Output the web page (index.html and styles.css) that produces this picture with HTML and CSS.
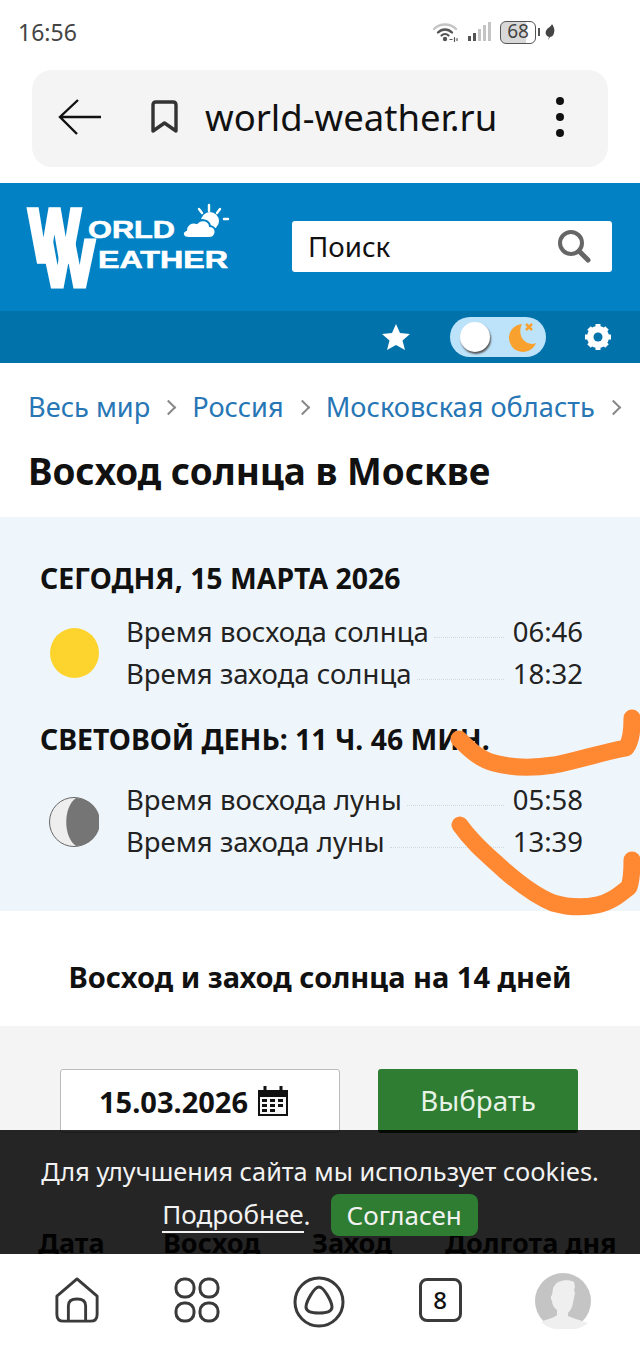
FILE: index.html
```html
<!DOCTYPE html>
<html lang="ru">
<head>
    <meta charset="UTF-8">
    <meta name="viewport" content="width=device-width, initial-scale=1.0">
    <title>Восход солнца в Москве</title>
    <link rel="stylesheet" href="styles.css">
</head>
<body>
    <div class="status">
        <span class="clock">16:56</span>
        <div class="status-icons">
            <svg width="26" height="20" viewBox="0 0 26 20" fill="none" stroke-linecap="round">
                <path d="M1 7c6-6 16-6 22 0" stroke="#c4c4c4" stroke-width="2.400"/>
                <path d="M5 10.500c4-4 10-4 14 0" stroke="#555" stroke-width="2.400"/>
                <path d="M8.500 13.500c2-2 5-2 7 0" stroke="#555" stroke-width="2.200"/>
                <circle cx="12" cy="17" r="2.200" fill="#555"/>
                <path d="M17 17.500h2M21.500 15.500v4M24 16.500v2" stroke="#555" stroke-width="1.200"/>
            </svg>
            <svg class="signal" width="24" height="20" viewBox="0 0 24 20">
                <rect x="0" y="14" width="3" height="5" fill="#555"/>
                <rect x="5" y="11" width="3" height="8" fill="#555"/>
                <rect x="10" y="7" width="3" height="12" fill="#c4c4c4"/>
                <rect x="15" y="3" width="3" height="16" fill="#c4c4c4"/>
                <rect x="20" y="0" width="3" height="19" fill="#c4c4c4"/>
            </svg>
            <span class="battery">68</span>
            <span class="battery-tip"></span>
            <svg class="leaf" width="10" height="16" viewBox="0 0 10 16"><path d="M7 0C9 3 10 6 9 9c-.6 3-3 4-4 4l-2 3 1-3C1 12 0 9 1 7c1-3 5-4 6-7z" fill="#444"/></svg>
        </div>
    </div>

    <div class="addr">
        <svg width="44" height="36" viewBox="0 0 44 36" fill="none" stroke="#111" stroke-width="2.400">
            <path d="M43 18H2M20 1 2 18l17 17"/>
        </svg>
        <svg class="bookmark" width="30" height="34" viewBox="0 0 30 34" fill="none" stroke="#333" stroke-width="3.400" stroke-linejoin="round">
            <path d="M3 31V5q0-3 3-3h17q3 0 3 3v26l-11.500-8z"/>
        </svg>
        <span class="addr-text">world-weather.ru</span>
        <div class="dots"><i></i><i></i><i></i></div>
    </div>

    <header class="site-head">
        <svg class="logo" width="204" height="90" viewBox="0 0 204 90">
            <text class="logo-w" transform="translate(3 60) scale(1 1.380)" font-size="54">W</text>
            <text class="logo-w" transform="translate(17 85) scale(1 1.200)" font-size="54">W</text>
            <text class="logo-t" x="62" y="37" font-size="24" textLength="87" lengthAdjust="spacingAndGlyphs">ORLD</text>
            <text class="logo-t" x="72" y="67" font-size="24" textLength="130" lengthAdjust="spacingAndGlyphs">EATHER</text>
            <circle cx="184" cy="20" r="9" fill="#fff"/>
            <path d="M163 37h20c8 0 9-11 1-12-1-6-9-8-13-3-6-2-11 2-11 7-5 2-4 8 3 8z" fill="#fff" stroke="#0282c5" stroke-width="2"/>
            <path d="M183 4v6M173 8l3 4M194 8l-3 4M198 18h4" stroke="#fff" stroke-width="2.400" stroke-linecap="round"/>
        </svg>
        <div class="search">
            <span>Поиск</span>
            <svg width="36" height="36" viewBox="0 0 36 36" fill="none" stroke="#666">
                <circle cx="15" cy="15" r="11" stroke-width="4"/>
                <path d="M23 23l9 9" stroke-width="5" stroke-linecap="round"/>
            </svg>
        </div>
    </header>

    <div class="site-sub">
        <svg width="30" height="28" viewBox="0 0 30 28"><path d="M15 1l4 9 10 1-7.500 6.500L24 27l-9-5-9 5 2.500-9.500L1 11l10-1z" fill="#fff"/></svg>
        <div class="toggle">
            <span class="knob"></span>
            <svg width="30" height="32" viewBox="0 0 30 32">
                <path d="M15 3a14 14 0 1 0 14 19C20 26 9 16 15 3z" fill="#f9a12e"/>
                <path d="M19 3l6 6M25 3l-6 6" stroke="#f9a12e" stroke-width="2.500"/>
            </svg>
        </div>
        <svg width="28" height="28" viewBox="0 0 28 28">
            <circle cx="14" cy="14" r="8" fill="none" stroke="#fff" stroke-width="6"/>
            <path d="M14 1v26M1 14h26M5 5l18 18M23 5 5 23" stroke="#fff" stroke-width="5"/>
            <circle cx="14" cy="14" r="4.500" fill="#0272ab"/>
        </svg>
    </div>

    <nav class="crumbs">
        <a>Весь мир</a><b></b><a>Россия</a><b></b><a>Московская область</a><b></b>
    </nav>
    <h1>Восход солнца в Москве</h1>

    <section class="panel">
        <h3>СЕГОДНЯ, 15 МАРТА 2026</h3>
        <div class="astro">
            <span class="sun"></span>
            <div class="astro-rows">
                <div class="row"><span>Время восхода солнца</span><i></i><span>06:46</span></div>
                <div class="row"><span>Время захода солнца</span><i></i><span>18:32</span></div>
            </div>
        </div>
        <h3 class="daylight">СВЕТОВОЙ ДЕНЬ: 11 Ч. 46 МИН.</h3>
        <div class="astro">
            <svg class="moon" width="50" height="50" viewBox="0 0 50 50">
                <circle cx="25" cy="25" r="24.500" fill="#eee" stroke="#666"/>
                <path d="M27 1a24 24 0 0 1 0 48C14 40 14 10 27 1z" fill="#757575"/>
            </svg>
            <div class="astro-rows">
                <div class="row"><span>Время восхода луны</span><i></i><span>05:58</span></div>
                <div class="row"><span>Время захода луны</span><i></i><span>13:39</span></div>
            </div>
        </div>
    </section>

    <h2>Восход и заход солнца на 14 дней</h2>

    <section class="days">
        <div class="picker">
            <div class="date-input">
                <span>15.03.2026</span>
                <svg width="32" height="32" viewBox="0 0 32 32">
                    <path d="M1 5h30v26H1z" fill="#111"/>
                    <path d="M3 12h26v17H3z" fill="#f8f8f8"/>
                    <path d="M5 14h5v3H5zM13 14h5v3h-5zM21 14h5v3h-5zM5 19h5v3H5zM13 19h5v3h-5zM21 19h5v3h-5zM5 24h5v3H5zM13 24h5v3h-5z" fill="#111"/>
                    <path d="M8 1v6M24 1v6" stroke="#111" stroke-width="3"/>
                </svg>
            </div>
            <button class="choose">Выбрать</button>
        </div>
        <div class="table-head">
            <span>Дата</span><span>Восход</span><span>Заход</span><span>Долгота дня</span>
        </div>
    </section>

    <svg class="scribble" width="640" height="1350" viewBox="0 0 640 1350" fill="none" stroke="#ff8833" stroke-width="17" stroke-linecap="round" stroke-linejoin="round">
        <path d="M459 739c10 10 20 20 35 24 18 5 40 5 60 2 22-4 45-12 72-17 6-8 6-20 6-30"/>
        <path d="M460 825c14 20 30 32 45 46 15 13 30 25 48 32 14 4 30 5 44 2 14-3 22-10 32-18 3-8 3-18 3-27"/>
    </svg>

    <div class="cookie">
        <p>Для улучшения сайта мы использует cookies.</p>
        <p class="cookie-line"><a>Подробнее</a>.<button>Согласен</button></p>
    </div>

    <div class="bottom-nav">
        <svg width="46" height="46" viewBox="0 0 46 48" fill="none" stroke="#3a3a3a" stroke-width="3" stroke-linejoin="round">
            <path d="M2 20 23 2l21 18v19q0 7-7 7H9q-7 0-7-7z"/>
            <path d="M14 46V30q0-7 9-7t9 7v16"/>
        </svg>
        <svg width="46" height="46" viewBox="0 0 46 46" fill="none" stroke="#3a3a3a" stroke-width="3">
            <rect x="2" y="2" width="18" height="18" rx="8"/><rect x="26" y="2" width="18" height="18" rx="8"/>
            <rect x="2" y="26" width="18" height="18" rx="8"/><rect x="26" y="26" width="18" height="18" rx="8"/>
        </svg>
        <svg class="alice" width="52" height="52" viewBox="0 0 52 52" fill="none" stroke="#3a3a3a" stroke-width="3">
            <circle cx="26" cy="26" r="24"/>
            <path d="M26 11c5 0 13 15 13 20s-6 6-13 6-13-1-13-6 8-20 13-20z" stroke-linejoin="round"/>
        </svg>
        <span class="tabs">8</span>
        <svg class="avatar" width="56" height="56" viewBox="0 0 56 56">
            <circle cx="28" cy="28" r="28" fill="#c4c4c4"/>
            <path d="M20 12c3-5 14-6 19-3l1 5-1 3 1 3-2 10c-1 5-3 8-5 10v3c4 2 12 4 20 7-6 5-16 8-25 7-9 0-17-3-22-8 6-3 13-4 16-7v-5c-3-2-5-6-5-9-1-1-2-4 0-6 1-3 0-7 3-10z" fill="#efefef"/>
        </svg>
    </div>
</body>
</html>
```

FILE: styles.css
```css
* {
    box-sizing: border-box;
}
html, body {
    margin: 0;
    height: 1350px;
    overflow: hidden;
}
body {
    position: relative;
    width: 640px;
    background: #fff;
    font-family: "Noto Sans", "Open Sans", sans-serif;
    color: #111;
}

/* phone status bar */
.status {
    height: 70px;
    display: flex;
    align-items: center;
    justify-content: space-between;
    padding: 0 85px 6px 18px;
}
.clock {
    font-size: 23px;
    color: #444;
}
.status-icons {
    display: flex;
    align-items: center;
}
.signal {
    margin-left: 9px;
}
.battery {
    width: 36px;
    height: 23px;
    margin-left: 8px;
    border: 1.500px solid #555;
    border-radius: 6px;
    background: linear-gradient(to right, #d8d8d8 75%, #fff 75%);
    color: #444;
    font-size: 19px;
    line-height: 19px;
    text-align: center;
}
.battery-tip {
    width: 2px;
    height: 8px;
    margin: 0 5px 0 2px;
    background: #555;
}

/* browser address bar */
.addr {
    height: 97px;
    margin: 0 32px 16px;
    padding: 0 44px 4px 26px;
    display: flex;
    align-items: center;
    background: #f4f4f4;
    border-radius: 20px;
}
.bookmark {
    margin-left: 48px;
}
.addr-text {
    margin-left: 25px;
    font-size: 36.500px;
    color: #111;
    flex: 1;
}
.dots {
    display: flex;
    flex-direction: column;
    gap: 8px;
}
.dots i {
    width: 8px;
    height: 8px;
    border-radius: 50%;
    background: #111;
}

/* site header */
.site-head {
    height: 128px;
    padding: 18px 28px 0 26px;
    display: flex;
    align-items: flex-start;
    justify-content: space-between;
    background: #0282c5;
}
.logo {
    overflow: visible;
}
.logo-w {
    fill: #fff;
    stroke: #fff;
    stroke-width: 4px;
    font-family: "Liberation Sans", sans-serif;
    font-weight: 700;
}
.logo-t {
    fill: #fff;
    stroke: #fff;
    stroke-width: .6px;
    font-family: "Liberation Sans", sans-serif;
    font-weight: 700;
}
.search {
    width: 320px;
    height: 51px;
    margin-top: 20px;
    padding: 0 20px 2px 16px;
    display: flex;
    align-items: center;
    justify-content: space-between;
    background: #fff;
    border-radius: 3px;
    font-size: 27.700px;
}
.site-sub {
    height: 52px;
    padding-right: 28px;
    display: flex;
    align-items: center;
    justify-content: flex-end;
    background: #0272ab;
}
.toggle {
    width: 96px;
    height: 40px;
    margin: 0 38px 0 39px;
    padding: 0 9px 0 10px;
    display: flex;
    align-items: center;
    justify-content: space-between;
    background: #bde3fa;
    border-radius: 20px;
}
.knob {
    width: 30px;
    height: 30px;
    border-radius: 50%;
    background: #fff;
    box-shadow: 1px 2px 2px #555;
}

/* breadcrumbs and titles */
.crumbs {
    height: 88px;
    padding: 25px 0 0 28px;
    display: flex;
    align-items: flex-start;
    font-size: 27.200px;
    line-height: 37px;
    color: #2776b5;
    white-space: nowrap;
}
.crumbs b {
    width: 11px;
    height: 11px;
    margin: 14px 18px 0 13px;
    border-top: 2px solid #888;
    border-right: 2px solid #888;
    transform: rotate(45deg);
}
h1 {
    margin: 0;
    height: 66px;
    padding-left: 28px;
    font-size: 36.900px;
    line-height: 40px;
    color: #111;
}
h2 {
    margin: 0;
    height: 115px;
    padding-top: 47px;
    font-size: 29px;
    line-height: 37px;
    text-align: center;
}

/* sun and moon panel */
.panel {
    height: 394px;
    padding: 43px 57px 0 40px;
    background: #eff6fb;
}
h3 {
    margin: 0;
    font-size: 28.400px;
    line-height: 36px;
}
.daylight {
    margin-top: 27px;
    margin-bottom: 21px;
    white-space: nowrap;
}
.astro {
    display: flex;
    align-items: center;
    margin-top: 14px;
}
.sun {
    width: 49px;
    height: 50px;
    margin: 2px 0 0 10px;
    border-radius: 50%;
    background: #fdd42d;
    flex-shrink: 0;
}
.moon {
    margin: 4px 0 0 9px;
    flex-shrink: 0;
}
.astro-rows {
    flex: 1;
    margin-left: 27px;
}
.row {
    height: 42px;
    display: flex;
    align-items: center;
    font-size: 27.500px;
    color: #222;
}
.row i {
    flex: 1;
    height: 13px;
    margin: 0 9px 0 5px;
    border-bottom: 1px dotted #d3d8dc;
}

/* 14 day block */
.days {
    height: 324px;
    padding-top: 43px;
    background: #f4f4f4;
}
.picker {
    display: flex;
    gap: 38px;
    padding-left: 60px;
}
.date-input {
    width: 280px;
    height: 64px;
    display: flex;
    align-items: center;
    justify-content: center;
    gap: 9px;
    padding-right: 12px;
    background: #fff;
    border: 1px solid #bbb;
    border-radius: 3px;
    font-size: 29px;
    font-weight: 700;
}
.choose {
    width: 200px;
    height: 64px;
    padding-top: 2px;
    border: 0;
    border-bottom: 3px solid #14461a;
    border-radius: 3px;
    background: #2e7d32;
    color: #e8f3e8;
    font-family: inherit;
    font-size: 27.700px;
}
.table-head {
    margin-top: 92px;
    padding-left: 38px;
    display: grid;
    grid-template-columns: 125px 149px 133px 1fr;
    font-size: 27px;
    font-weight: 700;
    line-height: 36px;
}

/* things over the page */
.scribble {
    position: absolute;
    left: 0;
    top: 0;
}
.cookie {
    position: absolute;
    left: 0;
    top: 1130px;
    width: 640px;
    height: 124px;
    padding-top: 21px;
    background: rgba(0, 0, 0, .85);
    color: #f2f2f2;
    font-size: 25.300px;
    text-align: center;
}
.cookie p {
    margin: 0;
    line-height: 40px;
}
.cookie-line {
    display: flex;
    justify-content: center;
    align-items: center;
    margin-top: 3px !important;
    font-size: 26px;
}
.cookie-line a {
    border-bottom: 2px solid #f2f2f2;
    line-height: 34px;
}
.cookie-line button {
    margin-left: 20px;
    height: 42px;
    padding: 0 16px;
    border: 0;
    border-radius: 8px;
    background: #2e7d32;
    color: #f2f2f2;
    font-family: inherit;
    font-size: 26px;
}
.bottom-nav {
    position: absolute;
    left: 0;
    top: 1254px;
    width: 640px;
    height: 96px;
    padding: 0 49px 4px 54px;
    display: flex;
    align-items: center;
    justify-content: space-between;
    background: #fff;
}
.alice {
    margin-top: 4px;
}
.avatar {
    margin-top: 2px;
}
.tabs {
    width: 43px;
    height: 44px;
    border: 3px solid #3a3a3a;
    border-radius: 8px;
    font-size: 24px;
    font-weight: 500;
    line-height: 37px;
    text-align: center;
    color: #111;
}
```
